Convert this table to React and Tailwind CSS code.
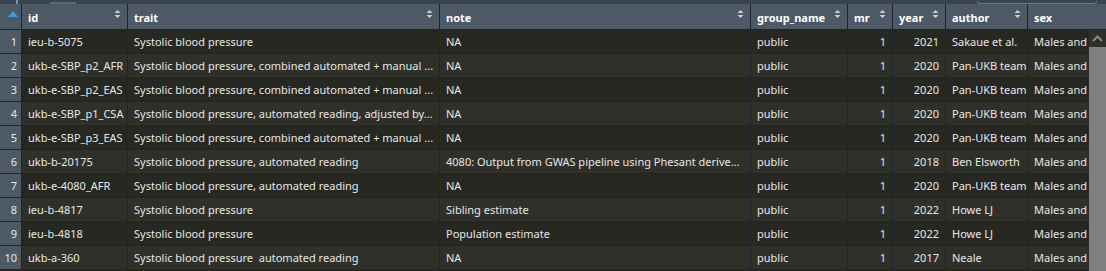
import React from "react";

const cols = [
  { key: "id", label: "id", w: "w-[106px]" },
  { key: "trait", label: "trait", w: "w-[312px]" },
  { key: "note", label: "note", w: "w-[311px]" },
  { key: "group", label: "group_name", w: "w-[97px]" },
  { key: "mr", label: "mr", w: "w-[45px]", right: true },
  { key: "year", label: "year", w: "w-[53px]", right: true },
  { key: "author", label: "author", w: "w-[82px]" },
  { key: "sex", label: "sex", w: "flex-1", last: true },
];

const rows = [
  ["ieu-b-5075", "Systolic blood pressure", "NA", "public", "1", "2021", "Sakaue et al.", "Males and Females"],
  ["ukb-e-SBP_p2_AFR", "Systolic blood pressure, combined automated + manual ...", "NA", "public", "1", "2020", "Pan-UKB team", "Males and Females"],
  ["ukb-e-SBP_p2_EAS", "Systolic blood pressure, combined automated + manual ...", "NA", "public", "1", "2020", "Pan-UKB team", "Males and Females"],
  ["ukb-e-SBP_p1_CSA", "Systolic blood pressure, automated reading, adjusted by...", "NA", "public", "1", "2020", "Pan-UKB team", "Males and Females"],
  ["ukb-e-SBP_p3_EAS", "Systolic blood pressure, combined automated + manual ...", "NA", "public", "1", "2020", "Pan-UKB team", "Males and Females"],
  ["ukb-b-20175", "Systolic blood pressure, automated reading", "4080: Output from GWAS pipeline using Phesant derive...", "public", "1", "2018", "Ben Elsworth", "Males and Females"],
  ["ukb-e-4080_AFR", "Systolic blood pressure, automated reading", "NA", "public", "1", "2020", "Pan-UKB team", "Males and Females"],
  ["ieu-b-4817", "Systolic blood pressure", "Sibling estimate", "public", "1", "2022", "Howe LJ", "Males and Females"],
  ["ieu-b-4818", "Systolic blood pressure", "Population estimate", "public", "1", "2022", "Howe LJ", "Males and Females"],
  ["ukb-a-360", "Systolic blood pressure  automated reading", "NA", "public", "1", "2017", "Neale", "Males and Females"],
];

function SortIcon() {
  return (
    <svg width="7" height="10" viewBox="0 0 7 10" className="absolute right-[6px] top-[5px]">
      <path d="M0.5 4 L3.5 1 L6.5 4 Z" fill="#c9cfd5" />
      <path d="M0.5 6 L3.5 9 L6.5 6 Z" fill="#c9cfd5" />
    </svg>
  );
}

export default function App() {
  return (
    <div
      className="w-[1106px] h-[271px] overflow-hidden bg-[#272822] text-[11px] text-[#e6e6e6]"
      style={{ fontFamily: '"Noto Sans", "Open Sans", sans-serif' }}
    >
      {/* remains of the toolbar above the grid */}
      <div className="h-[4px] bg-[#3a4450] flex items-end">
        <div className="ml-[16px] w-[2px] h-[4px] bg-[#6a9ad0]" />
        <div className="ml-[32px] w-[26px] h-[2px] bg-[#5a6672]" />
        <div className="ml-auto mr-[9px] w-[120px] h-[3px] border-b border-x border-[#6c7782] rounded-b-[3px]" />
      </div>

      {/* header */}
      <div className="flex h-[26px] bg-[#4d5965] border-b border-[#1c2633] text-white font-bold">
        <div className="w-[22px] shrink-0 border-r border-[#1c2633] relative">
          <svg width="10" height="6" viewBox="0 0 10 6" className="absolute left-[8px] top-[7px]">
            <path d="M0 6 L5 0 L10 6 Z" fill="#3d9be9" />
          </svg>
        </div>
        {cols.map((c) => (
          <div
            key={c.key}
            className={`${c.w} shrink-0 relative flex items-center pl-[6px] ${c.last ? "" : "border-r border-[#1c2633]"}`}
          >
            <span className="mt-[3px]">{c.label}</span>
            {!c.last && <SortIcon />}
          </div>
        ))}
      </div>

      {/* body */}
      <div className="flex">
        <div className="flex-1 min-w-0 overflow-hidden">
          {rows.map((r, i) => (
            <div
              key={i}
              className={`flex h-[24px] border-b border-[#1c2633] ${i % 2 === 0 ? "bg-[#272822]" : "bg-[#30302a]"}`}
            >
              <div className="w-[22px] shrink-0 bg-[#4d5965] border-r border-[#1c2633] flex items-center justify-end pr-[4px] pt-[1px] text-[#e8e8e8]">
                {i + 1}
              </div>
              {cols.map((c, j) => (
                <div
                  key={c.key}
                  className={`${c.last ? "w-[80px]" : c.w} shrink-0 flex items-center overflow-hidden whitespace-pre pt-[1px] ${
                    c.right ? "justify-end pr-[6px]" : "pl-[6px]"
                  } ${c.last ? "" : "border-r border-[#1c2633]"}`}
                >
                  {r[j]}
                </div>
              ))}
            </div>
          ))}
        </div>
        <div className="w-[17px] shrink-0 flex flex-col bg-[#7f7f7f] h-[241px]">
          <div className="h-[17px] bg-[#2e2e2a] flex items-center justify-center">
            <svg width="11" height="7" viewBox="0 0 11 7">
              <path d="M1 6 L5.5 1.5 L10 6" stroke="#8a8a8a" strokeWidth="2" fill="none" />
            </svg>
          </div>
        </div>
      </div>
    </div>
  );
}
